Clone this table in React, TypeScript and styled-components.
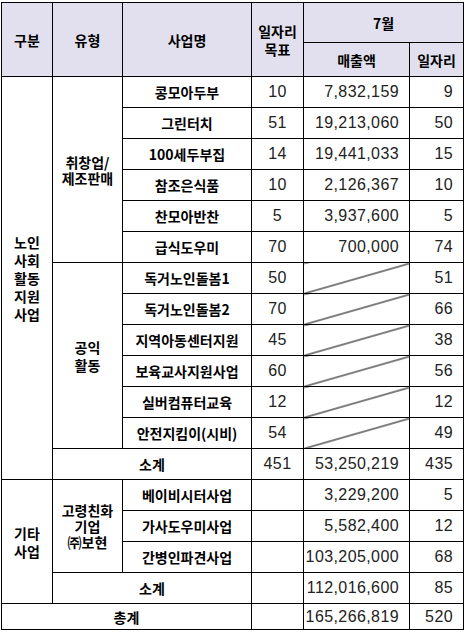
import React from "react";
import styled, { createGlobalStyle, css } from "styled-components";

const Global = createGlobalStyle`
  html, body { margin: 0; padding: 0; background: #fff; }
  body { font-family: "Noto Sans CJK KR", "Liberation Sans", sans-serif; }
`;

const Wrap = styled.div`
  padding: 2px 0 0 1px;
`;

const Table = styled.table`
  border-collapse: collapse;
  table-layout: fixed;
  width: 463px;
`;

const Row = styled.tr<{ $h: number }>`
  height: ${(p) => p.$h}px;
`;

type CellProps = {
  $align?: "left" | "center" | "right";
  $head?: boolean;
  $num?: boolean;
  $lh?: number;
  $diag?: boolean;
  $grayLeft?: boolean;
};

const Cell = styled.td<CellProps>`
  border: 1px solid #000;
  padding: 0 ${(p) => (p.$align === "right" ? "10px" : "0")} 0 0;
  text-align: ${(p) => p.$align || "center"};
  vertical-align: middle;
  color: #000;
  white-space: pre-line;
  background: ${(p) => (p.$head ? "#e2e0ee" : "#fff")};
  ${(p) =>
    p.$num
      ? css`
          font-family: "Liberation Sans", Arial, sans-serif;
          font-size: 16px;
          letter-spacing: 0.4px;
          color: #222;
        `
      : css`
          font-family: "Noto Sans CJK KR", sans-serif;
          font-size: 14px;
          font-weight: 700;
          line-height: ${p.$lh || 18}px;
        `}
  ${(p) =>
    p.$diag &&
    css`
      background: linear-gradient(
        to bottom right,
        transparent calc(50% - 1px),
        #000 50%,
        transparent calc(50% + 1px)
      );
    `}
  ${(p) =>
    p.$grayLeft &&
    css`
      border-left-color: #8a8a8a;
    `}
`;

const Col = styled.col<{ $w: number }>`
  width: ${(p) => p.$w}px;
`;

type Item = { name: string; goal?: string; sales?: string; jobs: string };

const startup: Item[] = [
  { name: "콩모아두부", goal: "10", sales: "7,832,159", jobs: "9" },
  { name: "그린터치", goal: "51", sales: "19,213,060", jobs: "50" },
  { name: "100세두부집", goal: "14", sales: "19,441,033", jobs: "15" },
  { name: "참조은식품", goal: "10", sales: "2,126,367", jobs: "10" },
  { name: "찬모아반찬", goal: "5", sales: "3,937,600", jobs: "5" },
  { name: "급식도우미", goal: "70", sales: "700,000", jobs: "74" },
];

const publicWork: Item[] = [
  { name: "독거노인돌봄1", goal: "50", jobs: "51" },
  { name: "독거노인돌봄2", goal: "70", jobs: "66" },
  { name: "지역아동센터지원", goal: "45", jobs: "38" },
  { name: "보육교사지원사업", goal: "60", jobs: "56" },
  { name: "실버컴퓨터교육", goal: "12", jobs: "12" },
  { name: "안전지킴이(시비)", goal: "54", jobs: "49" },
];

const other: Item[] = [
  { name: "베이비시터사업", sales: "3,229,200", jobs: "5" },
  { name: "가사도우미사업", sales: "5,582,400", jobs: "12" },
  { name: "간병인파견사업", sales: "103,205,000", jobs: "68" },
];

const Values = ({ item }: { item: Item }) => (
  <>
    <Cell $num>{item.goal ?? ""}</Cell>
    {item.sales ? (
      <Cell $num $align="right" $grayLeft>
        {item.sales}
      </Cell>
    ) : (
      <Cell $diag $grayLeft />
    )}
    <Cell $num $align="right">
      {item.jobs}
    </Cell>
  </>
);

export default function App() {
  return (
    <>
      <Global />
      <Wrap>
        <Table>
          <colgroup>
            <Col $w={51} />
            <Col $w={70} />
            <Col $w={129} />
            <Col $w={52} />
            <Col $w={106} />
            <Col $w={54} />
          </colgroup>
          <tbody>
            <Row $h={40}>
              <Cell $head rowSpan={2}>구분</Cell>
              <Cell $head rowSpan={2}>유형</Cell>
              <Cell $head rowSpan={2}>사업명</Cell>
              <Cell $head rowSpan={2}>{"일자리\n목표"}</Cell>
              <Cell $head colSpan={2} $grayLeft>7월</Cell>
            </Row>
            <Row $h={34}>
              <Cell $head $grayLeft>매출액</Cell>
              <Cell $head>일자리</Cell>
            </Row>

            {startup.map((it, i) => (
              <Row $h={31} key={it.name}>
                {i === 0 && (
                  <>
                    <Cell rowSpan={13}>{"노인\n사회\n활동\n지원\n사업"}</Cell>
                    <Cell rowSpan={6} $lh={16}>{"취창업/\n제조판매"}</Cell>
                  </>
                )}
                <Cell>{it.name}</Cell>
                <Values item={it} />
              </Row>
            ))}

            {publicWork.map((it, i) => (
              <Row $h={31} key={it.name}>
                {i === 0 && <Cell rowSpan={6}>{"공익\n활동"}</Cell>}
                <Cell>{it.name}</Cell>
                <Values item={it} />
              </Row>
            ))}

            <Row $h={31}>
              <Cell colSpan={2}>소계</Cell>
              <Cell $num>451</Cell>
              <Cell $num $align="right" $grayLeft>53,250,219</Cell>
              <Cell $num $align="right">435</Cell>
            </Row>

            {other.map((it, i) => (
              <Row $h={31} key={it.name}>
                {i === 0 && (
                  <>
                    <Cell rowSpan={4}>{"기타\n사업"}</Cell>
                    <Cell rowSpan={3} $lh={16}>{"고령친화\n기업\n㈜보현"}</Cell>
                  </>
                )}
                <Cell>{it.name}</Cell>
                <Values item={it} />
              </Row>
            ))}

            <Row $h={31}>
              <Cell colSpan={2}>소계</Cell>
              <Cell $num />
              <Cell $num $align="right" $grayLeft>112,016,600</Cell>
              <Cell $num $align="right">85</Cell>
            </Row>

            <Row $h={26}>
              <Cell colSpan={3}>총계</Cell>
              <Cell $num />
              <Cell $num $align="right" $grayLeft>165,266,819</Cell>
              <Cell $num $align="right">520</Cell>
            </Row>
          </tbody>
        </Table>
      </Wrap>
    </>
  );
}
